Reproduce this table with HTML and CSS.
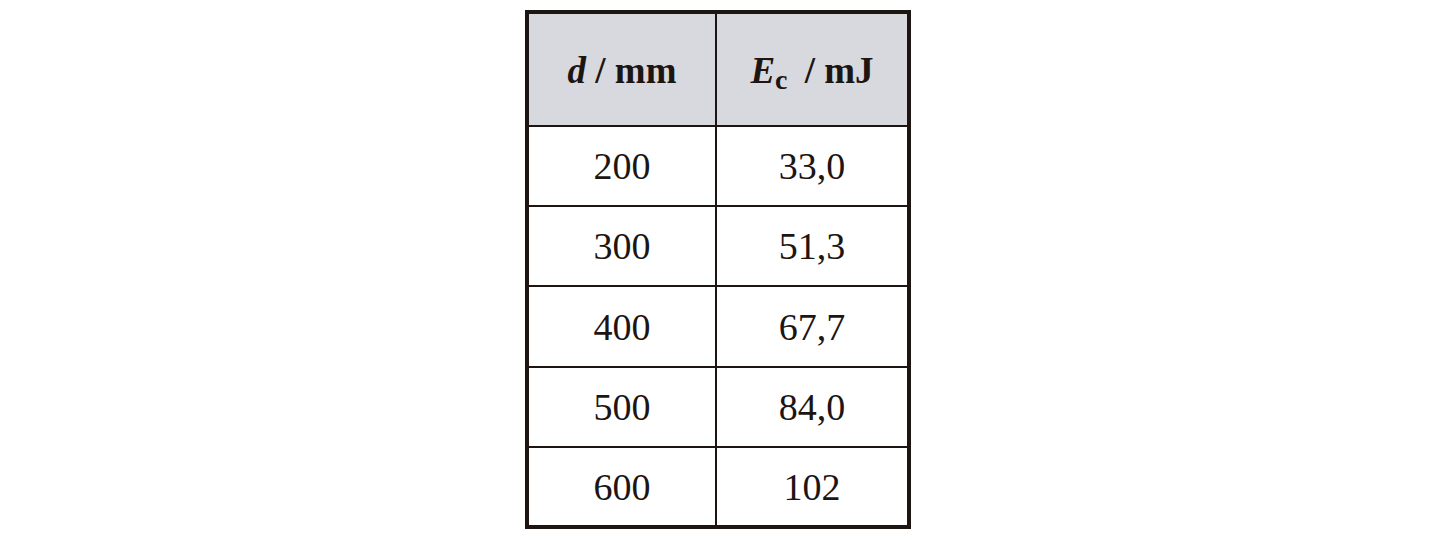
FILE: index.html
```html
<!DOCTYPE html>
<html lang="en">
<head>
  <meta charset="UTF-8" />
  <title>Energie en fonction de la distance</title>
  <link rel="stylesheet" href="styles.css">
</head>
<body>
  <main class="page">
    <table class="data-table">
      <thead>
        <tr>
          <th><i>d</i> / mm</th>
          <th><i>E</i><sub>c</sub> / mJ</th>
        </tr>
      </thead>
      <tbody>
        <tr><td>200</td><td>33,0</td></tr>
        <tr><td>300</td><td>51,3</td></tr>
        <tr class="row-tall"><td>400</td><td>67,7</td></tr>
        <tr><td>500</td><td>84,0</td></tr>
        <tr><td>600</td><td>102</td></tr>
      </tbody>
    </table>
  </main>
</body>
</html>
```
FILE: styles.css
```css
:root {
  --ink: #1c1512;
  --head-bg: #d8d9de;
}

body {
  margin: 0;
  background: #ffffff;
  color: var(--ink);
  font-family: 'Liberation Serif', 'Times New Roman', serif;
}

.page {
  display: flex;
  justify-content: center;
  padding-top: 10px;
  padding-right: 4px;
}

.data-table {
  border-collapse: separate;
  border-spacing: 0;
  border: 4px solid var(--ink);
  width: 386px;
  table-layout: fixed;
}

.data-table th,
.data-table td {
  padding: 0;
  text-align: center;
  border-bottom: 2px solid var(--ink);
  box-sizing: border-box;
}

.data-table th:first-child,
.data-table td:first-child {
  width: 188px;
  border-right: 2px solid var(--ink);
}

.data-table th {
  background: var(--head-bg);
  height: 113px;
  font-size: 37px;
  font-weight: bold;
  line-height: 1;
  padding-top: 2px;
}

.data-table th i {
  font-weight: bold;
}

.data-table th sub {
  font-size: 28px;
  vertical-align: -6px;
  line-height: 0;
  margin-right: 8px;
}

.data-table td {
  height: 80px;
  font-size: 38px;
  line-height: 1;
}

.data-table .row-tall td {
  height: 81px;
}

.data-table tbody tr:last-child td {
  height: 77px;
  border-bottom: none;
}
```
